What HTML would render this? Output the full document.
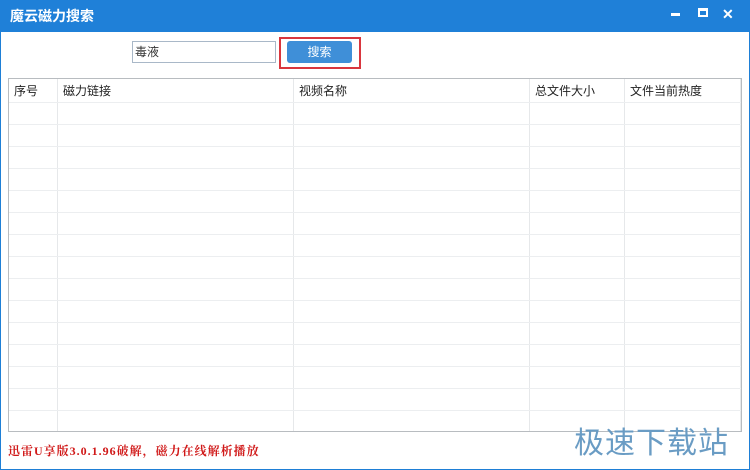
<!DOCTYPE html>
<html><head><meta charset="utf-8"><style>
*{margin:0;padding:0;box-sizing:border-box}
body{width:750px;height:470px;overflow:hidden;background:#fff;font-family:"Liberation Sans","Noto Sans CJK SC",sans-serif;font-size:12px;color:#222;position:relative}
.win{position:absolute;left:0;top:0;width:750px;height:470px;border:1px solid #1e7fd6;border-top:none}
.title{position:absolute;left:0;top:0;width:750px;height:32px;background:#1f80d8;color:#fff;font-weight:bold;font-size:14px;line-height:32px;padding-left:10px}
.ctl{position:absolute;top:0;color:#fff;font-weight:bold}
.input{position:absolute;left:132px;top:41px;width:144px;height:22px;border:1px solid #a9b8c8;padding-left:2px;line-height:20px;font-size:12px;color:#333}
.frame{position:absolute;left:279px;top:37px;width:82px;height:32px;border:2px solid #d9363e}
.btn{position:absolute;left:287px;top:41px;width:65px;height:22px;background:#3f8fd8;border-radius:3px;color:#fff;text-align:center;line-height:22px;font-size:12px}
.tbl{position:absolute;left:8px;top:78px;width:734px;height:354px;border:1px solid #b8bcc0;overflow:hidden}
.hd{position:absolute;top:0;height:23px;line-height:24px;padding-left:5px;font-size:12px}
.vl{position:absolute;top:0;width:1px;height:354px;background:#e6e8ea}
.hl{position:absolute;left:0;width:734px;height:1px;background:#eceef0}
.foot{position:absolute;left:8px;top:442px;color:#d01818;font-weight:bold;font-size:12px;letter-spacing:1px;font-family:"Liberation Serif","Noto Serif CJK SC",serif}
.wm{position:absolute;left:574px;top:418px;font-size:30px;color:#6a9cc4;letter-spacing:1px;font-family:"Noto Sans CJK SC",sans-serif}
</style></head><body>
<div class="win"></div>
<div class="title">魔云磁力搜索</div>
<div class="ctl" style="left:671px;top:13px;width:9px;height:3px;background:#fff"></div>
<div class="ctl" style="left:698px;top:8px;width:10px;height:9px;border:2px solid #fff;border-top-width:3px"></div>
<div class="ctl" style="left:722px;top:6px;font-size:14px">✕</div>
<div class="input">毒液</div>
<div class="frame"></div>
<div class="btn">搜索</div>
<div class="tbl">
<div class="hd" style="left:0">序号</div>
<div class="hd" style="left:49px">磁力链接</div>
<div class="hd" style="left:285px">视频名称</div>
<div class="hd" style="left:521px">总文件大小</div>
<div class="hd" style="left:616px">文件当前热度</div>
<div class="vl" style="left:48px"></div>
<div class="vl" style="left:284px"></div>
<div class="vl" style="left:520px"></div>
<div class="vl" style="left:615px"></div>
<div class="vl" style="left:731px"></div>
<div class="hl" style="top:23px"></div><div class="hl" style="top:45px"></div><div class="hl" style="top:67px"></div><div class="hl" style="top:89px"></div><div class="hl" style="top:111px"></div><div class="hl" style="top:133px"></div><div class="hl" style="top:155px"></div><div class="hl" style="top:177px"></div><div class="hl" style="top:199px"></div><div class="hl" style="top:221px"></div><div class="hl" style="top:243px"></div><div class="hl" style="top:265px"></div><div class="hl" style="top:287px"></div><div class="hl" style="top:309px"></div><div class="hl" style="top:331px"></div>
</div>
<div class="foot">迅雷U享版3.0.1.96破解，磁力在线解析播放</div>
<div class="wm">极速下载站</div>
</body></html>
